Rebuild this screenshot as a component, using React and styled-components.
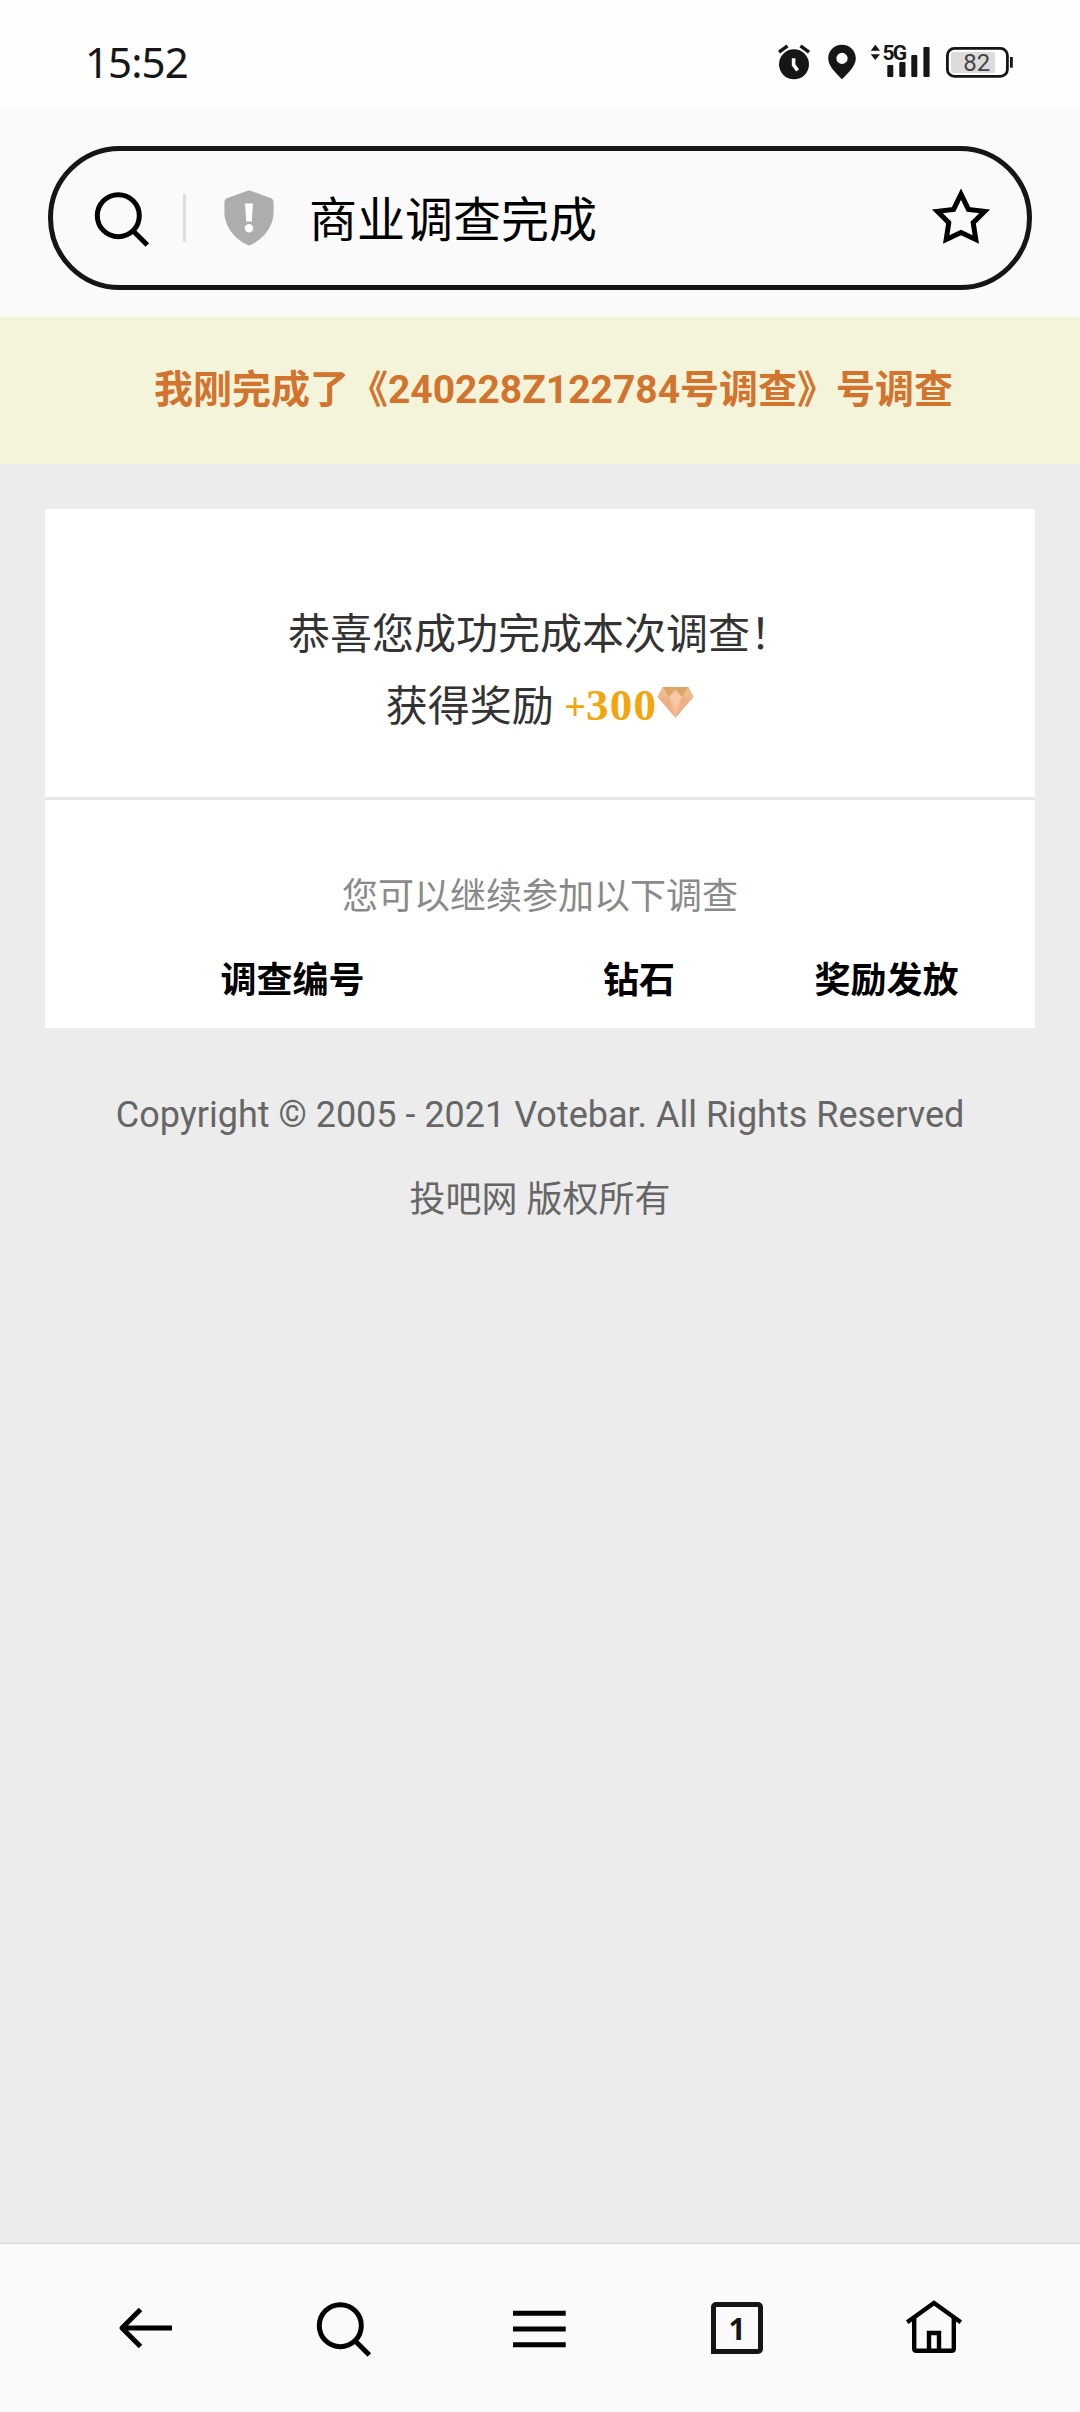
import React from 'react'
import styled, { createGlobalStyle } from 'styled-components'

const surveys = {
	title: '商业调查完成',
	notice: '我刚完成了《240228Z122784号调查》号调查',
	reward: 300,
	columns: ['调查编号', '钻石', '奖励发放'],
}

const StatusIcons = () => (
	<Status>
		<svg width='37' height='36' viewBox='0 0 37 36'>
			<circle cx='17' cy='20.3' r='15' fill='#161616' />
			<path d='M2 8.2L10.5 1.8M32 8.2L23.5 1.8' stroke='#161616' strokeWidth='3.4' />
			<path d='M16.6 14.2V21L20.6 26.4' fill='none' stroke='#fff' strokeWidth='3.6' />
		</svg>
		<svg width='30' height='36' viewBox='0 0 30 36'>
			<path
				fill='#161616'
				fillRule='evenodd'
				d='M15 .7C7.2.7 1.2 6.7 1.2 14.4C1.2 22 9 29 15 35.2C21 29 28.8 22 28.8 14.4C28.8 6.7 22.8.7 15 .7ZM15 8.8a5.6 5.6 0 1 1 0 11.2a5.6 5.6 0 1 1 0-11.2Z'
			/>
		</svg>
		<svg width='63' height='36' viewBox='0 0 63 36' fill='#161616'>
			<path d='M5.3.8L10 6.8H.7ZM5.3 16L10 10.2H.7Z' />
			<SignalText x='12.6' y='15.8'>5G</SignalText>
			<rect x='17.3' y='21' width='6' height='12' rx='1' />
			<rect x='29.3' y='18' width='6.2' height='15' rx='1' />
			<rect x='41.3' y='11' width='6' height='22' rx='1' />
			<rect x='53.4' y='3' width='6.2' height='30' rx='1' />
		</svg>
		<svg width='67' height='36' viewBox='0 0 67 36'>
			<rect x='1.4' y='4.4' width='60' height='28' rx='7' fill='#fff' stroke='#161616' strokeWidth='2.8' />
			<rect x='5' y='8' width='44' height='21' rx='2' fill='#dcdcdc' />
			<BatteryText x='17.3' y='27'>82</BatteryText>
			<rect x='64' y='13' width='2.8' height='10.7' fill='#161616' />
		</svg>
	</Status>
)

const SearchIcon = () => (
	<svg width='60' height='60' viewBox='0 0 60 60' fill='none' stroke='#000' strokeWidth='5'>
		<circle cx='27.3' cy='27.7' r='21' />
		<path d='M42 42.7L56.3 57' />
	</svg>
)

const ShieldIcon = () => (
	<svg width='50' height='56' viewBox='0 0 50 56'>
		<path d='M25 .3L46.5 8Q49.6 9.2 49.6 12.5V22C49.6 37.5 38 50.5 25 55.5C12 50.5.4 37.5.4 22V12.5Q.4 9.2 3.5 8Z' fill='#adadad' />
		<path d='M21 13.5H29L27.8 31.5H22.2Z' fill='#fff' />
		<circle cx='25' cy='38.3' r='4.2' fill='#fff' />
	</svg>
)

const StarIcon = () => (
	<svg width='60' height='60' viewBox='0 0 60 60' fill='none' stroke='#000' strokeWidth='5'>
		<path d='M30 6.2L37.4 21.4L53.6 23.3L42.2 34.6L44.8 51.4L30 44.4L15.2 51.4L17.8 34.6L6.4 23.3L22.6 21.4Z' />
	</svg>
)

const DiamondIcon = () => (
	<Diamond width='37' height='33' viewBox='0 0 37 33'>
		<path d='M6 1H31L36.5 11L18.5 32L.5 11Z' fill='#eeb183' />
		<path d='M6 1H31L36.5 11H.5Z' fill='#dfa565' />
		<path d='M12 11L18.5 3L25 11L18.5 32Z' fill='#f5bd9a' />
		<path d='M.5 11L6 1L12 11Z' fill='#eebd92' />
		<path d='M36.5 11L31 1L25 11Z' fill='#ecc08e' />
		<path d='M12 11L18.5 6L25 11L18.5 20Z' fill='#f8c8ab' />
	</Diamond>
)

const BackIcon = () => (
	<svg width='60' height='60' viewBox='0 0 60 60' fill='none' stroke='#000' strokeWidth='5'>
		<path d='M24.5 11.5L6 30L24.5 48.5' strokeLinejoin='round' />
		<path d='M7 30H56' />
	</svg>
)

const MenuIcon = () => (
	<svg width='60' height='60' viewBox='0 0 60 60' fill='none' stroke='#000' strokeWidth='5'>
		<path d='M3 15.3H55.7M3 31H55.7M3 46.7H55.7' />
	</svg>
)

const HomeIcon = () => (
	<svg width='60' height='60' viewBox='0 0 60 60' fill='none' stroke='#000' strokeWidth='4.4'>
		<path d='M3.2 24.2L30 5L56.8 24.2' />
		<path d='M10.2 20V50.5Q10.2 52.8 12.5 52.8H47.5Q49.8 52.8 49.8 50.5V20' />
		<path d='M25 52V35H35V52' />
	</svg>
)

const App = () => {
	return (
		<Page>
			<GlobalStyle />
			<StatusBar>
				<Clock>15:52</Clock>
				<StatusIcons />
			</StatusBar>
			<Header>
				<SearchBox>
					<SearchIcon />
					<Separator />
					<ShieldIcon />
					<Title>{surveys.title}</Title>
					<StarIcon />
				</SearchBox>
			</Header>
			<Content>
				<Notice>{surveys.notice}</Notice>
				<Card>
					<Result>
						<ResultLine>恭喜您成功完成本次调查！</ResultLine>
						<ResultLine>
							获得奖励&nbsp;<Reward>+<b>{surveys.reward}</b></Reward>
							<DiamondIcon />
						</ResultLine>
					</Result>
					<Hint>您可以继续参加以下调查</Hint>
					<TableHead>
						{surveys.columns.map((name) => <span key={name}>{name}</span>)}
					</TableHead>
				</Card>
				<Footer>
					<p>Copyright © 2005 - 2021 Votebar. All Rights Reserved</p>
					<p>投吧网 版权所有</p>
				</Footer>
			</Content>
			<NavBar>
				<NavItem><BackIcon /></NavItem>
				<NavItem><SearchIcon /></NavItem>
				<NavItem><MenuIcon /></NavItem>
				<NavItem><TabCount>1</TabCount></NavItem>
				<NavItem><HomeIcon /></NavItem>
			</NavBar>
		</Page>
	)
}

const GlobalStyle = createGlobalStyle`
	* {
		box-sizing: border-box;
	}
	body, p {
		margin: 0;
	}
	svg {
		display: block;
		flex-shrink: 0;
		overflow: visible;
	}
`

const Page = styled.div`
	display: flex;
	flex-direction: column;
	width: 1080px;
	height: 2412px;
	overflow: hidden;
	background-color: #ececec;
	font-family: Roboto, 'Noto Sans CJK SC', sans-serif;
`

const StatusBar = styled.div`
	display: flex;
	justify-content: space-between;
	height: 108px;
	padding: 44px 67px 0 85px;
	background-color: #fefefe;
`

const Clock = styled.div`
	height: 36px;
	line-height: 36px;
	font-family: 'Noto Sans', sans-serif;
	font-size: 42px;
	letter-spacing: -0.9px;
	color: #161616;
`

const Status = styled.div`
	display: flex;
	gap: 13px;
`

const SignalText = styled.text`
	font-size: 21px;
	font-weight: 700;
	letter-spacing: -1.8px;
`

const BatteryText = styled.text`
	font-size: 24px;
	fill: #444;
`

const Header = styled.div`
	height: 209px;
	padding: 38px 48px 0;
	background-color: #fafafa;
`

const SearchBox = styled.div`
	display: flex;
	align-items: center;
	height: 144px;
	padding: 0 36px 0 38px;
	border: 5px solid #161616;
	border-radius: 72px;
`

const Separator = styled.div`
	width: 3px;
	height: 48px;
	margin: 0 38px 0 32px;
	background-color: #dedede;
`

const Title = styled.div`
	flex: 1;
	padding: 5px 0 0 35px;
	font-size: 48px;
	line-height: 72px;
	color: #000;
`

const Content = styled.div`
	flex: 1;
`

const Notice = styled.div`
	height: 147px;
	padding-left: 27px;
	line-height: 147px;
	text-align: center;
	font-size: 39px;
	font-weight: 700;
	color: #d2732e;
	background-color: #f4f4da;
`

const Card = styled.div`
	height: 519px;
	margin: 45px 45px 0;
	background-color: #fff;
`

const Result = styled.div`
	height: 291px;
	padding-top: 90px;
	border-bottom: 3px solid #e6e6e6;
`

const ResultLine = styled.div`
	display: flex;
	justify-content: center;
	height: 72px;
	line-height: 72px;
	font-size: 42px;
	color: #333;
`

const Reward = styled.span`
	line-height: 68px;
	font-family: 'Noto Sans', sans-serif;
	font-size: 38px;
	color: #f3a50c;

	b {
		font-family: 'Liberation Serif', serif;
		font-size: 45px;
		letter-spacing: 1.2px;
	}
`

const Diamond = styled.svg`
	margin-top: 15px;
`

const Hint = styled.div`
	height: 96px;
	padding-top: 61px;
	line-height: 72px;
	text-align: center;
	font-size: 36px;
	color: #8a8a8a;
`

const TableHead = styled.div`
	display: grid;
	grid-template-columns: 50% 20% 30%;
	padding-top: 49px;
	line-height: 72px;
	text-align: center;
	font-size: 36px;
	font-weight: 700;
	color: #000;
`

const Footer = styled.div`
	padding-top: 45px;
	line-height: 84px;
	text-align: center;
	font-size: 36px;
	color: #666;

	p + p {
		padding-top: 1px;
	}
`

const NavBar = styled.div`
	display: flex;
	height: 169px;
	padding: 0 47.5px;
	border-top: 1px solid #d8d8d8;
	background-color: #fafafa;
`

const NavItem = styled.div`
	display: flex;
	flex: 1;
	align-items: center;
	justify-content: center;
`

const TabCount = styled.div`
	width: 52px;
	height: 52px;
	border: 5px solid #161616;
	border-radius: 5px 5px 5px 0;
	line-height: 43px;
	text-align: center;
	font-family: 'Noto Sans', sans-serif;
	font-size: 30px;
	font-weight: 700;
	color: #161616;
`

export default App
